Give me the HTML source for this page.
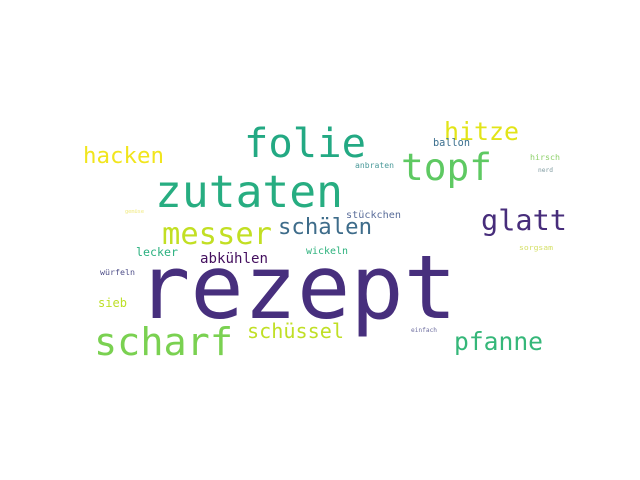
<!DOCTYPE html>
<html><head><meta charset="utf-8"><style>
html,body{margin:0;padding:0;background:#fff;}
svg{display:block;}
text{font-family:"DejaVu Sans Mono","Liberation Mono",monospace;}
</style></head><body>
<svg width="640" height="480" viewBox="0 0 640 480" xmlns="http://www.w3.org/2000/svg">
<rect width="640" height="480" fill="#fff"/>
<text x="137" y="318" font-size="88" fill="#472f7d" textLength="320" lengthAdjust="spacingAndGlyphs">rezept</text>
<text x="155" y="207" font-size="44.6" fill="#27ad81" textLength="188" lengthAdjust="spacingAndGlyphs">zutaten</text>
<text x="244" y="157" font-size="40.5" fill="#23a983" textLength="122" lengthAdjust="spacingAndGlyphs">folie</text>
<text x="401" y="180" font-size="37.8" fill="#5ec962" textLength="91" lengthAdjust="spacingAndGlyphs">topf</text>
<text x="94" y="355" font-size="38.5" fill="#7ad151" textLength="139" lengthAdjust="spacingAndGlyphs">scharf</text>
<text x="162" y="244" font-size="30.5" fill="#c2df23" textLength="110" lengthAdjust="spacingAndGlyphs">messer</text>
<text x="481" y="230" font-size="28.6" fill="#472d7b" textLength="86" lengthAdjust="spacingAndGlyphs">glatt</text>
<text x="444" y="140" font-size="25" fill="#e2e418" textLength="75" lengthAdjust="spacingAndGlyphs">hitze</text>
<text x="83" y="163" font-size="22.4" fill="#f1e51d" textLength="81" lengthAdjust="spacingAndGlyphs">hacken</text>
<text x="278" y="234" font-size="22.3" fill="#3e6c8a" textLength="94" lengthAdjust="spacingAndGlyphs">schälen</text>
<text x="454" y="350" font-size="24.6" fill="#35b779" textLength="89" lengthAdjust="spacingAndGlyphs">pfanne</text>
<text x="247" y="338" font-size="20" fill="#c0df25" textLength="97" lengthAdjust="spacingAndGlyphs">schüssel</text>
<text x="200" y="263" font-size="14" fill="#440f5e" textLength="68" lengthAdjust="spacingAndGlyphs">abkühlen</text>
<text x="136" y="256" font-size="11.6" fill="#2ab07f" textLength="42" lengthAdjust="spacingAndGlyphs">lecker</text>
<text x="306" y="254" font-size="10" fill="#2db27d" textLength="42" lengthAdjust="spacingAndGlyphs">wickeln</text>
<text x="346" y="218" font-size="10" fill="#5a6d9a" textLength="55" lengthAdjust="spacingAndGlyphs">stückchen</text>
<text x="100" y="275" font-size="8.3" fill="#50508a" textLength="35" lengthAdjust="spacingAndGlyphs">würfeln</text>
<text x="98" y="307" font-size="12" fill="#bddf26" textLength="29" lengthAdjust="spacingAndGlyphs">sieb</text>
<text x="433" y="146" font-size="10.2" fill="#3b6f8e" textLength="37" lengthAdjust="spacingAndGlyphs">ballon</text>
<text x="355" y="168" font-size="8" fill="#4b9a9a" textLength="39" lengthAdjust="spacingAndGlyphs">anbraten</text>
<text x="530" y="160" font-size="8.3" fill="#8ed16a" textLength="30" lengthAdjust="spacingAndGlyphs">hirsch</text>
<text x="538" y="172" font-size="6" fill="#7f9aa0" textLength="15" lengthAdjust="spacingAndGlyphs">nerd</text>
<text x="519" y="250" font-size="7" fill="#d5e068" textLength="34" lengthAdjust="spacingAndGlyphs">sorgsam</text>
<text x="411" y="332" font-size="6" fill="#6d6d9f" textLength="26" lengthAdjust="spacingAndGlyphs">einfach</text>
<text x="125" y="213" font-size="5" fill="#f0ea80" textLength="19" lengthAdjust="spacingAndGlyphs">gemüse</text>
</svg>
</body></html>
